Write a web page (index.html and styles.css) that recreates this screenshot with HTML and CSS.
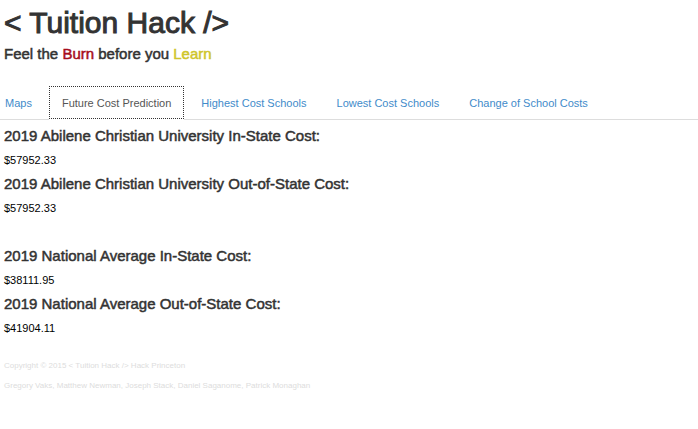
FILE: index.html
```html
<!DOCTYPE html>
<html lang="en">
<head>
    <meta charset="UTF-8">
    <meta name="viewport" content="width=device-width, initial-scale=1.0">
    <title>Tuition Hack</title>
    <link rel="stylesheet" href="styles.css">
</head>
<body>
    <header>
        <h1>&lt; Tuition Hack /&gt;</h1>
        <h4>Feel the <span class="burn">Burn</span> before you <span class="learn">Learn</span></h4>
    </header>

    <nav>
        <ul class="nav-tabs">
            <li><a href="#maps">Maps</a></li>
            <li class="active"><a href="#prediction">Future Cost Prediction</a></li>
            <li><a href="#highest">Highest Cost Schools</a></li>
            <li><a href="#lowest">Lowest Cost Schools</a></li>
            <li><a href="#change">Change of School Costs</a></li>
        </ul>
    </nav>

    <main id="prediction">
        <section class="costs">
            <h4>2019 Abilene Christian University In-State Cost:</h4>
            <p>$57952.33</p>
            <h4>2019 Abilene Christian University Out-of-State Cost:</h4>
            <p>$57952.33</p>
        </section>
        <section class="costs">
            <h4>2019 National Average In-State Cost:</h4>
            <p>$38111.95</p>
            <h4>2019 National Average Out-of-State Cost:</h4>
            <p>$41904.11</p>
        </section>
    </main>

    <footer>
        <p>Copyright © 2015 &lt; Tuition Hack /&gt; Hack Princeton</p>
        <p>Gregory Vaks, Matthew Newman, Joseph Stack, Daniel Saganome, Patrick Monaghan</p>
    </footer>
</body>
</html>
```
FILE: styles.css
```css
body {
    margin: 0;
    background-color: #fff;
    color: #000;
    font-family: "Helvetica Neue", "Liberation Sans", Arial, sans-serif;
    font-size: 11px;
    line-height: 16px;
}

h1, h4, p {
    margin: 0;
}

h1, h4 {
    color: #333;
    font-weight: 500;
    -webkit-text-stroke: 0.5px #333; /* medium weight */
}

h1 {
    font-size: 30px;
    line-height: 34px;
    -webkit-text-stroke-width: 1px;
}

h4 {
    font-size: 15px;
    line-height: 16px;
}

header {
    padding: 6px 4px 24px;
}

header h4 {
    margin-top: 6px;
}

.burn {
    color: #a60d1c;
    -webkit-text-stroke-color: #a60d1c;
}

.learn {
    color: #cfc52b;
    -webkit-text-stroke-color: #cfc52b;
}

.nav-tabs {
    display: flex;
    gap: 4px;
    margin: 0;
    padding: 0;
    list-style: none;
    border-bottom: 1px solid #ddd;
}

.nav-tabs a {
    display: block;
    padding: 8px 12px 7px;
    border: 1px solid transparent;
    color: #428bca;
    font-size: 11px;
    line-height: 16px;
    text-decoration: none;
}

.nav-tabs li:first-child a {
    padding-left: 4px;
}

.nav-tabs .active {
    margin-bottom: -1px;
    background-color: #fff;
}

.nav-tabs .active a {
    border: 1px dotted #333;
    color: #555;
}

.costs {
    padding: 8px 4px 16px;
}

.costs p {
    margin: 8px 0;
}

footer {
    padding: 0 4px;
    color: #ddd;
    font-size: 8px;
    line-height: 12px;
}

footer p {
    margin-bottom: 8px;
}
```
